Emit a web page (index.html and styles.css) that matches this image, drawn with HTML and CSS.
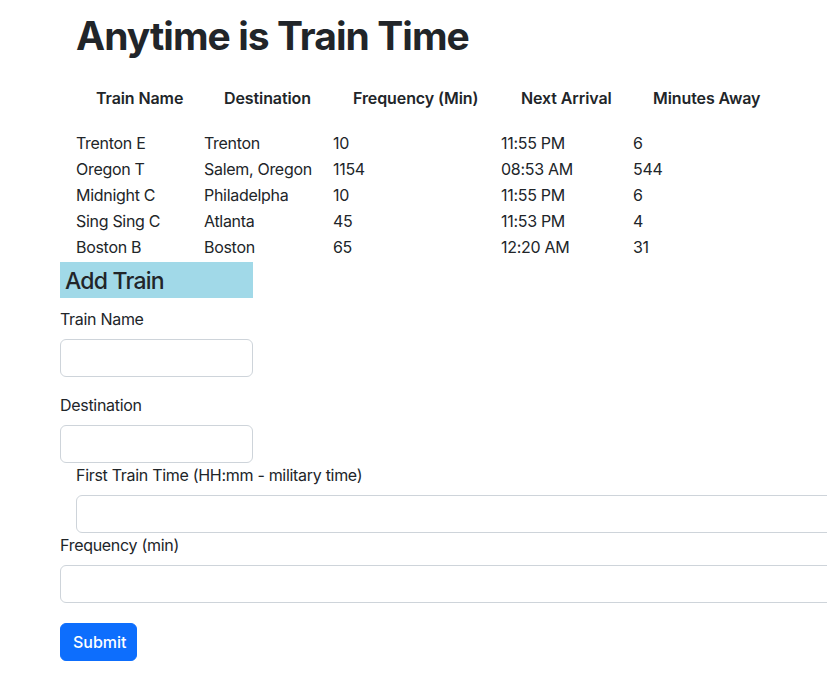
FILE: index.html
```html
<!DOCTYPE html>
<html lang="en">
<head>
<meta charset="utf-8">
<title>Train Scheduler</title>
<link rel="stylesheet" href="styles.css">
</head>
<body>
<div class="page">
  <header class="jumbo">
    <h1 class="title">Anytime is Train Time</h1>
  </header>

  <table class="trains">
    <thead>
      <tr>
        <th class="c1">Train Name</th>
        <th class="c2">Destination</th>
        <th class="c3">Frequency (Min)</th>
        <th class="c4">Next Arrival</th>
        <th class="c5">Minutes Away</th>
      </tr>
    </thead>
    <tbody>
      <tr><td>Trenton E</td><td>Trenton</td><td>10</td><td>11:55 PM</td><td>6</td></tr>
      <tr><td>Oregon T</td><td>Salem, Oregon</td><td>1154</td><td>08:53 AM</td><td>544</td></tr>
      <tr><td>Midnight C</td><td>Philadelpha</td><td>10</td><td>11:55 PM</td><td>6</td></tr>
      <tr><td>Sing Sing C</td><td>Atlanta</td><td>45</td><td>11:53 PM</td><td>4</td></tr>
      <tr><td>Boston B</td><td>Boston</td><td>65</td><td>12:20 AM</td><td>31</td></tr>
    </tbody>
  </table>

  <h3 class="add-title">Add Train</h3>

  <form class="train-form">
    <div class="field spaced">
      <label class="form-label" for="name">Train Name</label>
      <input class="form-control narrow" id="name" type="text">
    </div>
    <div class="field">
      <label class="form-label" for="dest">Destination</label>
      <input class="form-control narrow" id="dest" type="text">
    </div>
    <div class="field indented">
      <label class="form-label" for="first">First Train Time (HH:mm - military time)</label>
      <input class="form-control wide" id="first" type="text">
    </div>
    <div class="field">
      <label class="form-label" for="freq">Frequency (min)</label>
      <input class="form-control wide" id="freq" type="text">
    </div>
    <button class="btn-submit" type="button">Submit</button>
  </form>
</div>
</body>
</html>
```

FILE: styles.css
```css
* { box-sizing: border-box; }

html, body {
  margin: 0;
  padding: 0;
  overflow: hidden;
}

body {
  font-family: Inter, "Noto Sans", "Liberation Sans", sans-serif;
  font-size: 16px;
  line-height: 24px;
  letter-spacing: -0.3px;
  color: #212529;
  background: #ffffff;
}

.page {
  padding-left: 60px;
  overflow: hidden;
}

.jumbo {
  padding: 12px 16px 0;
}

.title {
  margin: 0 0 6px;
  font-size: 39px;
  line-height: 48px;
  font-weight: 700;
  letter-spacing: -0.95px;
}

.trains {
  margin-left: 16px;
  border-collapse: collapse;
  border-spacing: 0;
}

.trains th {
  padding: 20px;
  text-align: left;
  font-weight: 600;
  font-size: 16px;
  letter-spacing: -0.1px;
  white-space: nowrap;
}

.trains .c1 { width: 128px; }
.trains .c2 { width: 129px; }
.trains .c3 { width: 168px; }
.trains .c4 { width: 132px; }
.trains .c5 { width: 147px; }

.trains td {
  padding: 1px 0;
  height: 26px;
  white-space: nowrap;
}

.add-title {
  width: 193px;
  margin: 2px 0 0;
  padding: 4px 5px 1px;
  font-size: 23px;
  line-height: 31px;
  font-weight: 500;
  letter-spacing: -0.8px;
  background: #a1d9e8;
}

.train-form {
  display: flex;
  flex-direction: column;
  align-items: flex-start;
}

.field {
  display: flex;
  flex-direction: column;
  align-items: flex-start;
}

.field.spaced {
  margin-top: 9px;
  margin-bottom: 16px;
}

.field.indented {
  padding-left: 16px;
}

.form-label {
  margin-bottom: 8px;
}

.form-control {
  display: block;
  height: 38px;
  padding: 6px 12px;
  font: inherit;
  color: #212529;
  background: #fff;
  border: 1px solid #ced4da;
  border-radius: 6px;
}

.form-control.narrow { width: 193px; }
.form-control.wide { width: 800px; }

.btn-submit {
  margin-top: 20px;
  width: 77px;
  height: 38px;
  padding: 6px 12px;
  font: inherit;
  font-weight: 500;
  color: #fff;
  background: #0d6efd;
  border: 1px solid #0d6efd;
  border-radius: 6px;
}
```
